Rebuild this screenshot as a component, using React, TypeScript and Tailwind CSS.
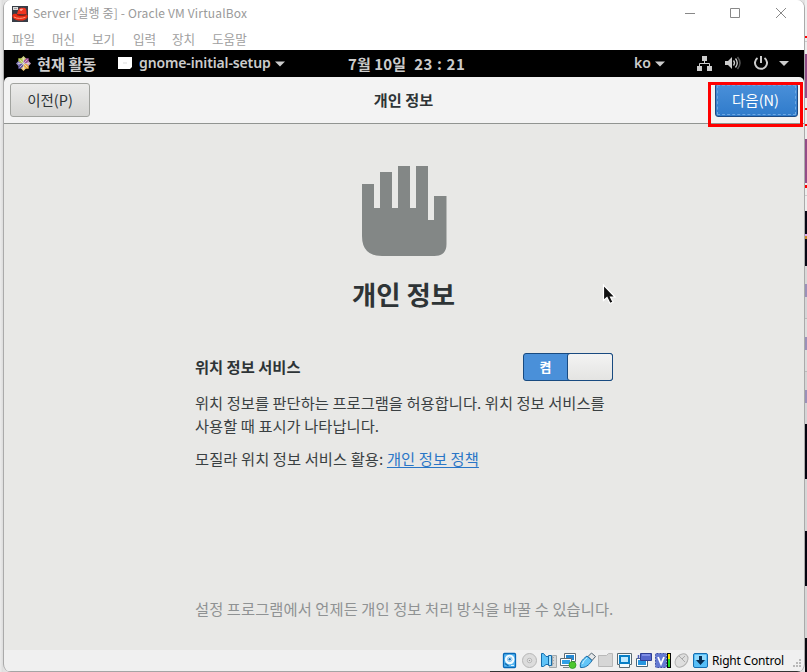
import React from 'react';

const KR = "font-['Noto_Sans_CJK_KR',sans-serif]";

/* Vertical slices of the desktop visible to the right of the window. */
const desktopSlices = [
  'h-[36px] bg-[#f0f0f0]', 'h-[2px] bg-[#f00]', 'h-[3px] bg-[#eee]', 'h-px bg-[#ccc]',
  'h-[12px] bg-[#eee]', 'h-[44px] bg-[#934c87]', 'h-[10px] bg-[#eee]', 'h-[2px] bg-[#f00]',
  'h-[14px] bg-[#eee]', 'h-[2px] bg-[#f00]', 'h-[13px] bg-[#eee]', 'h-[44px] bg-[#934c87]',
  'h-[2px] bg-[#eee]', 'h-[3px] bg-[#f00]', 'h-[7px] bg-[#eee]', 'h-px bg-[#ccc]',
  'h-[15px] bg-[#eee]', 'h-[23px] bg-[#060614]', 'h-[2px] bg-[#dca7ef]', 'h-[3px] bg-[#c98a2c]', 'h-[27px] bg-[#060614]',
  'h-[18px] bg-[#d8d8d8]', 'h-[13px] bg-[#9a91b8]', 'h-[21px] bg-[#d5d5d7]', 'h-px bg-[#bbb]',
  'h-[18px] bg-[#dedede]', 'h-[13px] bg-[#9a91b8]', 'h-[21px] bg-[#ddd]', 'h-px bg-[#bbb]',
  'h-[18px] bg-[#d5d5d5]', 'h-[13px] bg-[#9a91b8]', 'h-[21px] bg-[#d4d4d6]', 'h-[55px] bg-[#03030f]',
  'h-[52px] bg-[#d6d6d6]', 'h-[55px] bg-[#03030f]', 'h-[52px] bg-[#d6d6d6]', 'h-[34px] bg-[#08080f]',
];

function RedHatIcon() {
  return (
    <svg width="16" height="16" viewBox="0 0 16 16">
      <rect width="16" height="16" fill="#383d46" />
      <path d="M5 8C6 4.500 7 1.500 9.500 1.800c1.500.4 2.500-.8 4 .5 1 1.500 1.200 4 1 6.200z" fill="#ef3420" />
      <path d="M.3 10c0-2.200 2.500-2.500 4.500-2 2 1.500 7 2 9.700.2 2 1.300 1.500 4-1.500 5.500C8 15.800.8 14 .3 10z" fill="#ea2c14" />
      <path d="M4.800 7.800c2 1.600 6.800 1.800 9.600.2v.9c-3 1.600-7.500 1.300-9.600 0z" fill="#8f1c0f" />
      <path d="M7.500 3.500c1-1.200 2.500-.6 4-.4L9 5.200z" fill="#ffa894" />
      <path d="M2 11c3 1.800 8 1.800 11.500.3" stroke="#ff9a7c" fill="none" />
      <rect x="1" y="1" width="5" height="3" fill="#dcdcdc" />
      <path d="M2 2.500h3" stroke="#737373" strokeWidth=".6" />
    </svg>
  );
}

function CentosIcon() {
  return (
    <svg width="15" height="15" viewBox="0 0 15 15">
      <path d="M2.300 2.300h5v5h-5z" fill="#b5c94d" /><path d="M7.700 2.300h5v5h-5z" fill="#a4529b" />
      <path d="M2.300 7.700h5v5h-5z" fill="#6257a2" /><path d="M7.700 7.700h5v5h-5z" fill="#e9ae42" />
      <path d="M7.500 0 10 2.500 7.500 5 5 2.500z" fill="#d1d582" /><path d="m15 7.500-2.500 2.500L10 7.500 12.500 5z" fill="#c9a0be" />
      <path d="m7.500 15 2.500-2.500L7.500 10 5 12.500z" fill="#f0cd7c" /><path d="M0 7.500 2.500 10 5 7.500 2.500 5z" fill="#8c84be" />
      <path d="M7.500 2v11M2 7.500h11M3.500 3.500l8 8M11.500 3.500l-8 8" stroke="#e8e1e1" strokeWidth=".7" />
    </svg>
  );
}

function Caret() {
  return <svg width="10" height="6" viewBox="0 0 10 6"><path d="M0 .5h10L5 5.500z" fill="#ccc" /></svg>;
}

function HandIcon() {
  return (
    <svg width="85" height="90" viewBox="0 0 85 90">
      <path d="M0 18h12v24h6V6h12v36h6V0h12v42h6V0h12v54h6V30h12.500v48Q84.500 90 72.500 90H20Q0 90 0 70z" fill="#838786" />
    </svg>
  );
}

function StatusIcons() {
  return (
    <svg width="206" height="17" viewBox="0 0 206 17">
      {/* Hard disk */}
      <rect x="1.500" y="1.500" width="12" height="14" rx="1" fill="#59b8f2" stroke="#0869b8" strokeWidth="1.300" />
      <circle cx="7.700" cy="7.500" r="4.800" fill="#f4fbff" />
      <circle cx="7.700" cy="7.300" r="2.300" fill="none" stroke="#6cb6e6" strokeWidth=".8" />
      <circle cx="7.700" cy="7.300" r="1.200" fill="#1573bd" />
      <path d="M3 11.500 6.500 14" fill="none" stroke="#156cad" strokeWidth="1.500" />
      <path d="M9 13.500h3" stroke="#dff4ff" />
      {/* Optical disc */}
      <circle cx="27.500" cy="8.500" r="7" fill="#dcdcdc" stroke="#b6b6b6" />
      <circle cx="27.500" cy="8.500" r="2.200" fill="#ececec" stroke="#b4b4b4" />
      <circle cx="27.500" cy="8.500" r=".8" fill="#999" />
      {/* Audio */}
      <path d="M50.500 3.500h4v12h-7v-2h3zM50 5.500h2M50 8.500h2M50 11.500h2" fill="#d4d7d9" stroke="#a3a8ab" />
      <path d="M39.500 1.500h2l2.500 3h2.500v8H44l-2.500 2h-2z" fill="#5fc3f8" stroke="#176eac" />
      <path d="M46.500 3.500h3v10h-3z" fill="#a5e3ff" stroke="#1769a6" />
      {/* Network */}
      <path d="M62.500 1.500h11v8h-11z" fill="#fff" stroke="#5f6d75" /><path d="M64 3h8v5h-8z" fill="#2588d2" />
      <path d="M58.500 6.500h11v7h-11z" fill="#fff" stroke="#5f6d75" /><path d="M60 8h8v4h-8z" fill="#2f9fe6" />
      <path d="M61 15.500h6" stroke="#77848b" />
      <circle cx="70.500" cy="13" r="3.500" fill="#4fc72e" stroke="#259017" strokeWidth=".7" />
      {/* USB */}
      <path d="m86 4.500 3.500-3.500 4 3.500-3.500 4z" fill="#e6e8ea" stroke="#52636f" />
      <path d="M78.500 15.500c-1-4 1-7.500 6.500-11.500l5 4.500c-3 5-7 7.500-11.500 7z" fill="#62c5f8" stroke="#156ba9" />
      <path d="M80.500 12c1-3 2.500-4.500 4.500-6" fill="none" stroke="#cdf1ff" />
      {/* Shared folder */}
      <path d="M96.500 3.500h8l2-2h4v13h-14z" fill="#d6d6d6" stroke="#b8b8b8" />
      {/* Display */}
      <path d="M115.500 1.500h14v11h-2v3h-10v-3h-2z" fill="#f3fbfe" stroke="#5a6a72" />
      <rect x="118" y="4" width="9" height="7" fill="#bfeaff" stroke="#087fc6" strokeWidth="2" />
      {/* Recording */}
      <path d="M134.500 6.500h11v8h-11z" fill="#fff" stroke="#4b6678" /><path d="M136 8h8v5h-8z" fill="#2596e0" />
      <path d="M138.500 1.500h11v7h-11z" fill="#5567cc" stroke="#2f3f93" /><path d="M136.500 3v4" stroke="#4a5db9" strokeWidth="1.500" /><path d="M140 3h8" stroke="#a7b5ff" />
      {/* Virtualisation */}
      <rect x="153.500" y="1.500" width="11" height="14" rx="1" fill="#657ad2" stroke="#3f50a5" strokeDasharray="2 1" />
      <path d="m156 5 3 7 3-7" fill="none" stroke="#fff" strokeWidth="1.800" />
      <rect x="165" y="1" width="4" height="15" fill="#080808" /><path d="M166 2h2v5h-2z" fill="#ffe600" /><path d="M166 7h2v8h-2z" fill="#1bdc25" />
      {/* Mouse */}
      <ellipse cx="179.500" cy="8.500" rx="5.500" ry="7.500" transform="rotate(42 179.500 8.500)" fill="#dedede" stroke="#b0b0b0" />
      <path d="m177 4 6 6M180 7l3-3" stroke="#aaa" />
      {/* Host key */}
      <rect x="191.500" y="1.500" width="14" height="14" rx="1.500" fill="#57bef7" stroke="#166eb0" />
      <path d="M193 3h11v5h-11z" fill="#92dafd" />
      <path d="M197 4h3v4h3l-4.500 5L194 8h3z" fill="#082f55" />
    </svg>
  );
}

function TitleBar() {
  return (
    <div className="flex h-[27px] items-center bg-white pl-[8px]">
      <RedHatIcon />
      <span className={`${KR} -mt-px ml-[5px] w-[220px] whitespace-nowrap text-[12px] leading-[16px] tracking-[0.16px] text-[#9a9a9a]`}>Server [실행 중] - Oracle VM VirtualBox</span>
      <svg className="-mt-px ml-auto mr-[16px]" width="104" height="14" viewBox="0 0 104 14" fill="none" stroke="#888">
        <path d="M1 7.500h10M46.500 2.500h9v9h-9zM92 2l10 10M102 2 92 12" />
      </svg>
    </div>
  );
}

function MenuBar() {
  return (
    <div className={`${KR} flex h-[23px] items-center bg-white pl-[8px] text-[12.600px] leading-[23px] text-[#a0a0a0]`}>
      <span className="w-[40px]">파일</span><span className="w-[40px]">머신</span><span className="w-[41px]">보기</span>
      <span className="w-[39px]">입력</span><span className="w-[40px]">장치</span><span>도움말</span>
    </div>
  );
}

function GnomeBar() {
  return (
    <div className="flex h-[27px] items-center bg-black pl-[12px] text-[#ccc]">
      <CentosIcon />
      <span className={`${KR} -mt-[2px] ml-[6px] w-[81px] whitespace-nowrap text-[15.200px] font-bold leading-[24px]`}>현재 활동</span>
      <svg width="15" height="13" viewBox="0 0 15 13"><path d="M0 0h14v10l-2 2H0z" fill="#fff" /><path d="M5 6h4" stroke="#ddd" /></svg>
      <span className="-mt-[2px] ml-[6px] w-[136px] whitespace-nowrap font-['Noto_Sans',sans-serif] text-[14px] font-semibold leading-[22px] tracking-[-0.13px]">gnome-initial-setup</span>
      <Caret />
      <span className={`${KR} ml-[63px] flex w-[286px] gap-[8px] whitespace-nowrap text-[15px] font-bold leading-[24px]`}>
        <span className="tracking-[0.1px]">7월 10일</span><span className="tracking-[0.6px]">23 : 21</span>
      </span>
      <span className="-mt-[2px] w-[21px] font-['Noto_Sans',sans-serif] text-[14px] font-semibold leading-[22px]">ko</span>
      <Caret />
      <svg className="ml-[32px]" width="93" height="17" viewBox="0 0 93 17" fill="none" stroke="#ccc">
        <path d="M5 1h5v5H5zM0 11h5v5H0zM10 11h5v5h-5z" fill="#ccc" stroke="none" />
        <path d="M7.500 6v3M2.500 11V8.500h10V11" />
        <path d="M28 6h3l4-4v12l-4-4h-3z" fill="#ccc" stroke="none" />
        <path d="M36.500 5.500q2 2.500 0 5M38.500 3.500q3.500 4.500 0 9" strokeWidth="1.300" /><path d="M40.500 2q5 6 0 12" stroke="#555" strokeWidth="1.500" />
        <path d="M60.500 3a6 6 0 1 0 7 0M64 1v7" strokeWidth="2" />
        <path d="M82 6h10l-5 5z" fill="#ccc" stroke="none" />
      </svg>
    </div>
  );
}

function HeaderBar() {
  return (
    <div className="bg-black">
      <div className={`${KR} flex h-[47px] items-start justify-between rounded-t-[5px] border-b border-[#919491] bg-[#f3f3f3] pl-[6px] pr-[6px] pt-[6px] text-[#2e3436]`}>
        <button className="h-[34px] w-[80px] rounded-[3px] border border-[#a1a39f] bg-linear-to-b from-[#ebebea] to-[#d4d4d2] text-[14.500px] leading-[30px]">이전(P)</button>
        <h2 className="ml-[2px] pt-[4px] text-[15.200px] font-bold leading-[24px]">개인 정보</h2>
        <button className="h-[34px] w-[83px] rounded-[3px] border border-[#1c4a83] bg-linear-to-b from-[#4a90d9] to-[#2f7bcb] p-px text-[14.500px] leading-[28px] text-white">
          <span className="block h-[30px] border border-dashed border-[#6da6e0] pr-[2px]">다음(N)</span>
        </button>
      </div>
    </div>
  );
}

function PrivacyPage() {
  return (
    <main className={`${KR} flex h-[526px] flex-col bg-[#e8e8e6] text-[#2e3436]`}>
      <div className="flex flex-col items-center pt-[42px] pr-px">
        <div className="pl-px"><HandIcon /></div>
        <h1 className="mt-[18px] whitespace-nowrap text-[26.400px] font-bold leading-[40px]">개인 정보</h1>
      </div>
      <div className="ml-[191px] mt-[39px] flex h-[28px] w-[418px] items-center justify-between">
        <span className="-mt-[2px] text-[15.300px] font-bold leading-[28px]">위치 정보 서비스</span>
        <div className="flex h-[28px] w-[90px] rounded-[3px] border border-[#184a80] bg-[#4a90d9]">
          <span className="w-[43px] text-center text-[13px] font-bold leading-[25px] text-white">켬</span>
          <span className="-my-px -mr-px flex-1 rounded-[3px] border border-[#184a80] bg-linear-to-b from-[#f3f3f3] to-[#e4e4e2]" />
        </div>
      </div>
      <p className="ml-[191px] mt-[10px] w-[440px] text-[15.300px] leading-[23px] tracking-[0.04px] text-[#3a4042]">위치 정보를 판단하는 프로그램을 허용합니다. 위치 정보 서비스를<br />사용할 때 표시가 나타납니다.</p>
      <p className="ml-[191px] mt-[10px] text-[15.300px] leading-[23px] tracking-[0.09px] text-[#3a4042]">모질라 위치 정보 서비스 활용: <a className="text-[#2a76c6] underline underline-offset-2">개인 정보 정책</a></p>
      <p className="ml-[191px] mt-[127px] whitespace-nowrap text-[15.300px] leading-[23px] tracking-[0.09px] text-[#8f9293]">설정 프로그램에서 언제든 개인 정보 처리 방식을 바꿀 수 있습니다.</p>
    </main>
  );
}

export default function App() {
  return (
    <div className="relative flex h-[672px] w-[807px] overflow-hidden bg-[#e2e2e2]">
      <div className="w-[3px] bg-linear-to-r from-[#ececec] to-[#dcdcdc]" />
      <div className="h-[672px] w-[802px] overflow-hidden rounded-[8px] border-x border-[#aaa] bg-[#f0f0f0]">
        <TitleBar />
        <MenuBar />
        <GnomeBar />
        <HeaderBar />
        <PrivacyPage />
        <footer className="flex h-[21px] items-center pl-[498px]">
          <StatusIcons />
          <span className="ml-[4px] w-[79px] whitespace-nowrap font-['Noto_Sans',sans-serif] text-[12px] leading-[18px] tracking-[-0.2px] text-black">Right Control</span>
          <svg className="mt-[6px]" width="12" height="14" viewBox="0 0 12 14" fill="#b8b8b8"><path d="M8 2h2v2H8zM5 5h2v2H5zM8 5h2v2H8zM2 8h2v2H2zM5 8h2v2H5zM8 8h2v2H8z" /></svg>
        </footer>
        <div className="flex h-px"><div className="w-[486px] bg-[#a5a5a5]" /><div className="flex-1 bg-[#333]" /></div>
      </div>
      <div className="w-[2px]">
        {desktopSlices.map((slice, i) => <div key={i} className={slice} />)}
      </div>
      <div className="absolute left-[708px] top-[82px] h-[45px] w-[95px] border-[3px] border-[#f00]" />
      <svg className="absolute left-[602px] top-[284px]" width="16" height="21" viewBox="0 0 16 21">
        <path d="M1.500 1v15.500l3.500-3 3 6 3-1.500-2.500-5H13z" fill="#111" stroke="#fff" strokeWidth="1.200" />
      </svg>
    </div>
  );
}
